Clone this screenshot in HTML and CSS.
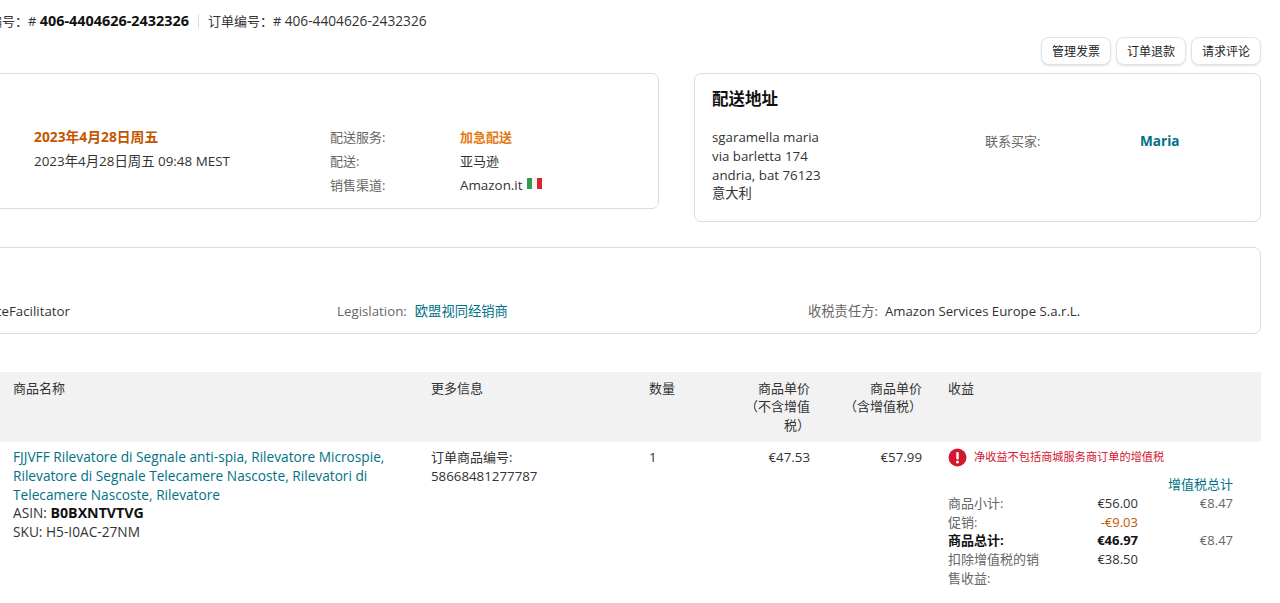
FILE: index.html
```html
<!DOCTYPE html>
<html>
<head>
<meta charset="UTF-8">
<title>订单详情</title>
<link rel="stylesheet" href="styles.css">
</head>
<body>
<div class="page">

  <div class="order-ids">
    <span>订单编号：# <b>406-4404626-2432326</b></span>
    <span class="sep"></span>
    <span>订单编号：# <span class="order-no">406-4404626-2432326</span></span>
  </div>

  <div class="actions">
    <button class="btn">管理发票</button>
    <button class="btn">订单退款</button>
    <button class="btn">请求评论</button>
  </div>

  <div class="cards">
    <div class="card ship">
      <div class="date-late">2023年4月28日周五</div>
      <div class="label">配送服务:</div>
      <div class="fast">加急配送</div>
      <div class="ship-latin">2023年4月28日周五 09:48 MEST</div>
      <div class="label">配送:</div>
      <div>亚马逊</div>
      <div></div>
      <div class="label">销售渠道:</div>
      <div class="channel ship-latin">Amazon.it
        <svg class="flag" width="15" height="11" viewBox="0 0 15 11">
          <rect width="5" height="11" fill="#2e9e4a"/>
          <rect x="5" width="5" height="11" fill="#f4f4f4"/>
          <rect x="10" width="5" height="11" fill="#d8262f"/>
        </svg>
      </div>
    </div>

    <div class="card address">
      <h3>配送地址</h3>
      <div class="addr-body">
        <div>sgaramella maria<br>via barletta 174<br>andria, bat 76123<br>意大利</div>
        <div class="label buyer">联系买家:</div>
        <a class="buyer-name">Maria</a>
      </div>
    </div>
  </div>

  <div class="card tax">
    <div class="tax-model">MarketplaceFacilitator</div>
    <div><span class="label">Legislation:</span><a class="link tax-val">欧盟视同经销商</a></div>
    <div><span class="label">收税责任方:</span><span class="tax-val tax-name">Amazon Services Europe S.a.r.L.</span></div>
  </div>

  <div class="items">
    <div class="items-head">
      <div class="col-name">商品名称</div>
      <div class="col-info">更多信息</div>
      <div class="col-qty">数量</div>
      <div class="col-price">商品单价（不含增值税）</div>
      <div class="col-price">商品单价<br>（含增值税）</div>
      <div class="col-rev">收益</div>
    </div>
    <div class="items-row">
      <div class="col-name product">
        <a class="link">FJJVFF Rilevatore di Segnale anti-spia, Rilevatore Microspie, Rilevatore di Segnale Telecamere Nascoste, Rilevatori di Telecamere Nascoste, Rilevatore</a><br>
        ASIN: <b>B0BXNTVTVG</b><br>
        SKU: H5-I0AC-27NM
      </div>
      <div class="col-info"><span class="cjk">订单商品编号:</span><br>58668481277787</div>
      <div class="col-qty">1</div>
      <div class="col-price">€47.53</div>
      <div class="col-price">€57.99</div>
      <div class="col-rev">
        <div class="notice">
          <svg width="19" height="19" viewBox="0 0 19 19">
            <circle cx="9.5" cy="9.5" r="9" fill="#d3172f"/>
            <rect x="8.3" y="4" width="2.4" height="7.5" rx="1" fill="#fff"/>
            <circle cx="9.5" cy="14" r="1.5" fill="#fff"/>
          </svg>
          <span>净收益不包括商城服务商订单的增值税</span>
        </div>
        <div class="sums">
          <div></div><div></div><a class="link num">增值税总计</a>
          <div class="label">商品小计:</div><div class="num">€56.00</div><div class="num label">€8.47</div>
          <div class="label">促销:</div><div class="num promo">-€9.03</div><div></div>
          <b>商品总计:</b><b class="num">€46.97</b><div class="num label">€8.47</div>
          <div class="label">扣除增值税的销售收益:</div><div class="num">€38.50</div><div></div>
        </div>
      </div>
    </div>
  </div>

</div>
</body>
</html>
```

FILE: styles.css
```css
html, body {
  margin: 0;
  height: 603px;
  overflow: hidden;
  background: #fff;
}
body {
  font-family: "Open Sans", "Noto Sans CJK SC", sans-serif;
  font-size: 13.3px;
  line-height: 18.75px;
  color: #333;
}
a { text-decoration: none; }
b { color: #111; }
.cjk { font-size: 13px; }

/* the page is scrolled sideways, its left edge is cut off */
.page {
  width: 1361px;
  margin-left: -100px;
  padding-top: 12px;
}

.order-ids {
  display: flex;
  align-items: center;
  height: 18px;
  margin-left: 63px;
  font-size: 13px;
  white-space: nowrap;
}
.order-ids b { font-size: 14.4px; }
.order-no { font-size: 13.7px; }
.sep {
  width: 1px;
  height: 14px;
  background: #ddd;
  margin: 0 9px;
}

.actions {
  display: flex;
  justify-content: flex-end;
  gap: 5px;
  margin-top: 7px;
}
.btn {
  height: 28px;
  width: 70px;
  padding: 0;
  font-family: inherit;
  font-size: 12px;
  color: #222;
  background: #fff;
  border: 1px solid #e3e3e3;
  border-radius: 8px;
  box-shadow: 0 1px 2px rgba(0,0,0,.12);
}

.cards {
  display: flex;
  align-items: flex-start;
  gap: 35px;
  margin-top: 8px;
}
.card {
  box-sizing: border-box;
  background: #fff;
  border: 1px solid #ddd;
  border-radius: 7px;
}
.label { color: #666; }

.ship {
  width: 759px;
  height: 136px;
  padding: 51px 0 0 133px;
  display: grid;
  grid-template-columns: 296px 130px 1fr;
  grid-auto-rows: 24px;
  align-items: center;
  font-size: 13px;
}
.ship-latin { font-size: 13.4px; }
.date-late {
  font-size: 13.8px;
  font-weight: 700;
  color: #c45500;
}
.fast {
  font-weight: 600;
  color: #e47911;
}
.channel {
  display: flex;
  align-items: center;
  gap: 4px;
}
.flag { margin-top: -3px; }

.address {
  width: 567px;
  height: 149px;
  padding: 13px 17px 0;
}
.address h3 {
  margin: 0 0 17px;
  font-size: 16.5px;
  line-height: 24px;
  color: #111;
}
.addr-body {
  display: grid;
  grid-template-columns: 273px 155px 1fr;
}
.buyer {
  padding-top: 4px;
  font-size: 13px;
}
.buyer-name {
  padding-top: 4px;
  font-size: 13.6px;
  font-weight: 700;
  color: #007185;
}

.tax {
  display: grid;
  grid-template-columns: 436px 471px 1fr;
  height: 87px;
  margin-top: 25px;
  padding-top: 54px;
}
.tax-model {
  text-align: right;
  padding-right: 267px;
  white-space: nowrap;
}
.tax-val { margin-left: 8px; }
.tax-name {
  margin-left: 7px;
  font-size: 13.2px;
}
.link { color: #007185; }

.items {
  margin: 38px 100px 0;
  width: 1261px;
}
.items-head, .items-row {
  display: grid;
  grid-template-columns: 417px 218px 94px 95px 112px 1fr;
}
.items-head {
  height: 70px;
  box-sizing: border-box;
  padding-top: 6.5px;
  font-size: 13px;
  background: #f2f2f2;
}
.items-row { padding-top: 6px; }
.col-name, .col-info, .col-qty { padding-left: 14px; }
.col-name { padding: 0 13px; }
.product { font-size: 13.7px; }
.product .link { font-size: 13.7px; }
.product b { font-size: 14.2px; }
.col-price {
  padding: 0 14px 0 10px;
  text-align: right;
}
.col-rev { padding-left: 12px; }

.notice {
  display: flex;
  align-items: center;
  gap: 7px;
  height: 19px;
  font-size: 11.2px;
  color: #d3172f;
}
.sums {
  display: grid;
  grid-template-columns: 95px 95px 95px;
  margin-top: 8px;
  font-size: 13px;
}
.num {
  text-align: right;
  white-space: nowrap;
}
.promo { color: #c45500; }
```
